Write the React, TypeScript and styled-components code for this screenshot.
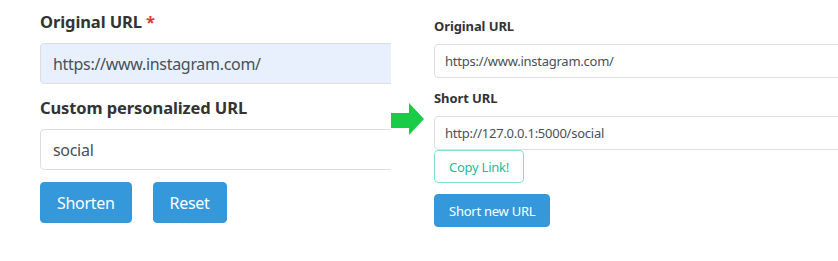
import React from "react";
import styled, { createGlobalStyle } from "styled-components";

const GlobalStyle = createGlobalStyle`
	html, body {
		margin: 0;
		padding: 0;
		background: #ffffff;
		overflow: hidden;
	}
	body {
		font-family: "Noto Sans", "Open Sans", Arial, sans-serif;
		color: #212529;
	}
`;

const Page = styled.div`
	display: flex;
	width: 838px;
	height: 261px;
	overflow: hidden;
`;

// left screenshot: the form before submitting, cropped at its right edge
const FormShot = styled.div`
	width: 351px;
	flex-shrink: 0;
	overflow: hidden;
	padding: 10px 0 0 40px;
`;

const ArrowCol = styled.div`
	width: 43px;
	flex-shrink: 0;
	padding-top: 103px;
`;

const ResultShot = styled.div`
	flex: 1;
	overflow: hidden;
	padding-top: 15px;
`;

const Label = styled.label<{ $big?: boolean }>`
	display: block;
	font-weight: 700;
	color: #333333;
	font-size: ${(p) => (p.$big ? "16.5px" : "13px")};
	letter-spacing: -0.1px;
	line-height: ${(p) => (p.$big ? "24px" : "22px")};
	margin-bottom: ${(p) => (p.$big ? "9px" : "7px")};
`;

const Star = styled.span`
	color: #e3342f;
`;

const Field = styled.input<{ $big?: boolean; $filled?: boolean }>`
	display: block;
	box-sizing: border-box;
	width: ${(p) => (p.$big ? "420px" : "460px")};
	height: ${(p) => (p.$big ? "41px" : "34px")};
	padding: ${(p) => (p.$big ? "0 12px" : "0 10px")};
	font-family: inherit;
	font-size: ${(p) => (p.$big ? "16px" : "13px")};
	letter-spacing: ${(p) => (p.$big ? "-0.3px" : "-0.25px")};
	color: #495057;
	background: ${(p) => (p.$filled ? "#e8f0fe" : "#ffffff")};
	border: 1px solid #dedede;
	border-radius: 4px;
	outline: none;
`;

const Group = styled.div<{ $big?: boolean }>`
	margin-bottom: ${(p) => (p.$big ? "12px" : "9px")};
`;

const Buttons = styled.div`
	display: flex;
	gap: 21px;
	margin-top: 2px;
`;

const Button = styled.button<{ $big?: boolean }>`
	box-sizing: border-box;
	height: ${(p) => (p.$big ? "41px" : "33px")};
	padding: ${(p) => (p.$big ? "0 16px" : "0 14px")};
	font-family: inherit;
	font-size: ${(p) => (p.$big ? "16px" : "13px")};
	letter-spacing: ${(p) => (p.$big ? "-0.3px" : "-0.25px")};
	color: #ffffff;
	background: #3498db;
	border: 1px solid #3498db;
	border-radius: 4px;
`;

const OutlineButton = styled(Button)`
	display: block;
	color: #1abc9c;
	background: #ffffff;
	border-color: #7fe3cd;
	margin-bottom: 11px;
`;

const Arrow = () => (
	<svg width="34" height="33" viewBox="0 0 34 33">
		<path d="M0 10 H18 V0 L33 16 L18 32 V25 H0 Z" fill="#18cc48" />
	</svg>
);

export default function App() {
	return (
		<Page>
			<GlobalStyle />
			<FormShot>
				<Group $big>
					<Label $big>
						Original URL <Star>*</Star>
					</Label>
					<Field $big $filled readOnly value="https://www.instagram.com/" />
				</Group>
				<Group $big>
					<Label $big>Custom personalized URL</Label>
					<Field $big readOnly value="social" />
				</Group>
				<Buttons>
					<Button $big>Shorten</Button>
					<Button $big>Reset</Button>
				</Buttons>
			</FormShot>
			<ArrowCol>
				<Arrow />
			</ArrowCol>
			<ResultShot>
				<Group>
					<Label>Original URL</Label>
					<Field readOnly value="https://www.instagram.com/" />
				</Group>
				<Label>Short URL</Label>
				<Field readOnly value="http://127.0.0.1:5000/social" />
				<OutlineButton>Copy Link!</OutlineButton>
				<Button>Short new URL</Button>
			</ResultShot>
		</Page>
	);
}
